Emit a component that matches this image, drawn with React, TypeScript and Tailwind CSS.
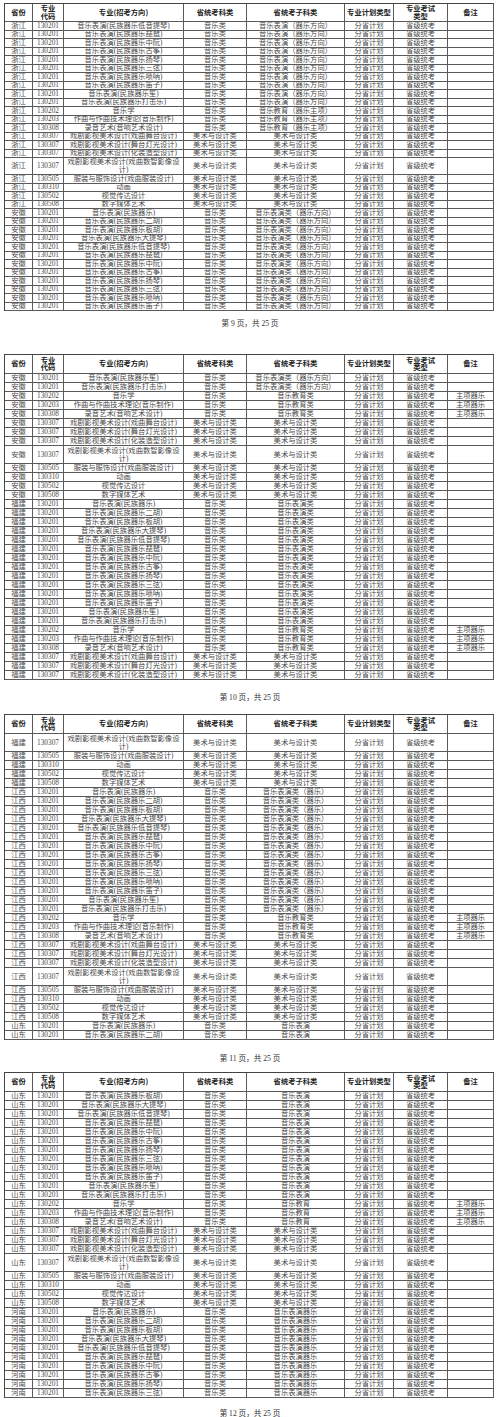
type Row = {
  p: string;
  c: string;
  m: string[];
  s1: string;
  s2: string;
  n: string;
  tall?: boolean;
};

const INSTRUMENTS = ["", "二胡", "板胡", "大提琴", "低音提琴", "琵琶", "中阮", "古筝", "扬琴", "三弦", "唢呐", "笛子", "笙", "打击乐"];

function province(p: string, perf: string, edu: string, note: string): Row[] {
  const rows: Row[] = INSTRUMENTS.map((i) => ({
    p,
    c: "130201",
    m: [`音乐表演(民族器乐${i})`],
    s1: "音乐类",
    s2: perf,
    n: "",
  }));
  const music: [string, string][] = [
    ["130202", "音乐学"],
    ["130203", "作曲与作曲技术理论(音乐制作)"],
    ["130308", "录音艺术(音响艺术设计)"],
  ];
  music.forEach(([c, m]) => rows.push({ p, c, m: [m], s1: "音乐类", s2: edu, n: note }));
  const art: [string, string[], boolean?][] = [
    ["130307", ["戏剧影视美术设计(戏曲舞台设计)"]],
    ["130307", ["戏剧影视美术设计(舞台灯光设计)"]],
    ["130307", ["戏剧影视美术设计(化装造型设计)"]],
    ["130307", ["戏剧影视美术设计(戏曲数智影像设", "计)"], true],
    ["130505", ["服装与服饰设计(戏曲服装设计)"]],
    ["130310", ["动画"]],
    ["130502", ["视觉传达设计"]],
    ["130508", ["数字媒体艺术"]],
  ];
  art.forEach(([c, m, tall]) =>
    rows.push({ p, c, m, s1: "美术与设计类", s2: "美术与设计类", n: "", tall })
  );
  return rows;
}

const all: Row[] = [
  ...province("浙江", "音乐表演（器乐方向）", "音乐教育（器乐主项）", "").slice(4),
  ...province("安徽", "音乐表演类（器乐方向）", "音乐教育类", "主项器乐"),
  ...province("福建", "音乐表演类", "音乐教育类", "主项器乐"),
  ...province("江西", "音乐表演类（器乐）", "音乐教育类", "主项器乐"),
  ...province("山东", "音乐表演", "音乐教育", "主项器乐"),
  ...province("河南", "音乐表演器乐", "音乐教育", "主项器乐").slice(0, 10),
];

// the first page was captured a little smaller than the others
const small = { head: "h-[18px]", row: "h-[8.5px]", tall: "h-[17px]" };
const normal = { head: "h-[19px]", row: "h-[9px]", tall: "h-[18px]" };

const pages = [
  { rows: all.slice(0, 33), size: small, footer: "第 9 页，共 25 页", gap: "h-[43px] pt-[9px]" },
  { rows: all.slice(33, 66), size: normal, footer: "第 10 页，共 25 页", gap: "h-[34px] pt-[14px]" },
  { rows: all.slice(66, 98), size: normal, footer: "第 11 页，共 25 页", gap: "h-[32px] pt-[15px]" },
  { rows: all.slice(98, 131), size: normal, footer: "第 12 页，共 25 页", gap: "h-[24px] pt-[12px]" },
];

type Size = typeof normal;

const COLS = "grid grid-cols-[28px_31px_120px_63px_98px_49px_54px_46px]";
const CELL =
  "flex flex-col items-center justify-center border-r border-b border-[#5a5a5a] whitespace-nowrap overflow-hidden";

function Header({ size }: { size: Size }) {
  const heads = [["省份"], ["专业", "代码"], ["专业(招考方向)"], ["省统考科类"], ["省统考子科类"], ["专业计划类型"], ["专业考试", "类型"], ["备注"]];
  return (
    <div className={`${COLS} ${size.head} font-['Noto_Sans_CJK_SC',sans-serif] text-[7.3px] font-bold leading-[7.5px] text-[#222]`}>
      {heads.map((h, i) => (
        <div key={i} className={CELL}>
          {h.map((t) => (
            <span key={t}>{t}</span>
          ))}
        </div>
      ))}
    </div>
  );
}

function TableRow({ r, size }: { r: Row; size: Size }) {
  const cells = [r.p, r.c, r.m, r.s1, r.s2, "分省计划", "省级统考", r.n];
  return (
    <div className={`${COLS} ${r.tall ? size.tall : size.row}`}>
      {cells.map((v, i) => (
        <div key={i} className={CELL}>
          {(Array.isArray(v) ? v : [v]).map((t, j) => (
            <span key={j}>{t}</span>
          ))}
        </div>
      ))}
    </div>
  );
}

export default function App() {
  return (
    <div className="w-[500px] bg-white pt-[3px] font-['Liberation_Serif','Noto_Sans_CJK_SC',serif] text-[7.3px] leading-[8px] text-[#4a4a4a]">
      {pages.map((pg) => (
        <div key={pg.footer}>
          <div className="ml-[4px] w-[490px] border-l border-t border-[#444]">
            <Header size={pg.size} />
            {pg.rows.map((r, i) => (
              <TableRow key={i} r={r} size={pg.size} />
            ))}
          </div>
          <div className={`${pg.gap} text-center text-[7.6px] leading-[8px] text-[#333]`}>{pg.footer}</div>
        </div>
      ))}
    </div>
  );
}
